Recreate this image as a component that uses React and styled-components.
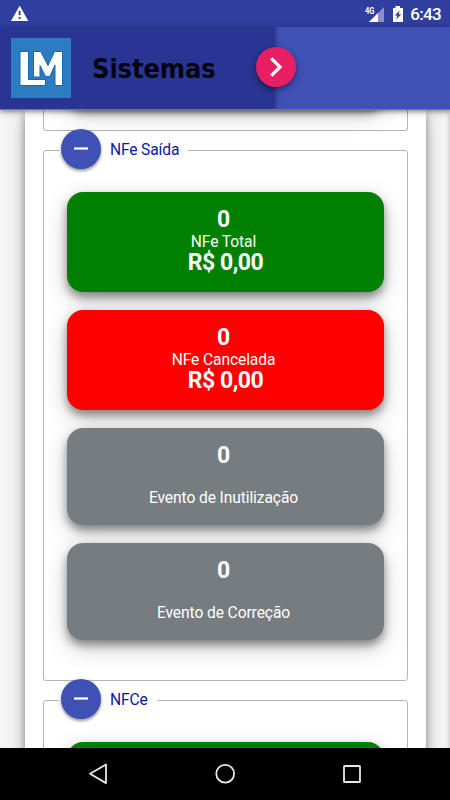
import React from "react";
import styled, { createGlobalStyle } from "styled-components";

const GlobalStyle = createGlobalStyle`
  * { box-sizing: border-box; }
  body { margin: 0; overflow: hidden; font-family: Roboto, "Liberation Sans", sans-serif; }
`;

const Screen = styled.div`
  display: flex;
  flex-direction: column;
  width: 450px;
  height: 800px;
  overflow: hidden;
  background: #f5f5f5;
`;

const StatusBar = styled.div`
  flex: none;
  display: flex;
  align-items: center;
  height: 27px;
  padding: 0 9px 0 11px;
  background: #303f9f;
  color: #fff;
`;

const StatusIcons = styled.div`
  display: flex;
  align-items: center;
  gap: 7px;
  margin-left: auto;
`;

const Clock = styled.span`
  margin-left: -1px;
  font-size: 17px;
  line-height: 20px;
  font-weight: 500;
  letter-spacing: -0.7px;
  padding-top: 1px;
`;

const Header = styled.header`
  flex: none;
  position: relative;
  z-index: 2;
  display: flex;
  height: 83px;
  background: #3f51b5;
  border-bottom: 1px solid #6d77ac;
  box-shadow: 0 2px 4px rgba(0, 0, 0, 0.35), 0 3px 9px rgba(0, 0, 0, 0.12);
`;

const Drawer = styled.div`
  display: flex;
  align-items: center;
  width: 275px;
  padding-left: 11px;
  background: #283593;
  box-shadow: 1px 0 5px rgba(0, 0, 0, 0.3);
  clip-path: inset(0 -10px 0 0);
`;

const Brand = styled.span`
  margin: 2px 0 0 21px;
  color: #050511;
  font: bold 27px/32px "DejaVu Sans Condensed", "Noto Sans", sans-serif;
  font-stretch: condensed;
  letter-spacing: -0.1px;
`;

const DrawerToggle = styled.button`
  position: absolute;
  left: 256px;
  top: 20px;
  display: flex;
  padding: 0;
  border: 0;
  border-radius: 50%;
  background: #e91e63;
  box-shadow: 0 2px 4px rgba(0, 0, 0, 0.35), 0 3px 9px rgba(0, 0, 0, 0.2);
`;

const Content = styled.main`
  flex: 1;
  min-height: 0;
  overflow: hidden;
  padding: 0 24px 0 25px;
  box-shadow: inset -4px 0 4px -3px rgba(0, 0, 0, 0.2);
`;

const Panel = styled.div`
  display: flex;
  flex-direction: column;
  height: 680px;
  padding: 0 18px;
  background: #fff;
  box-shadow: 0 4px 8px rgba(0, 0, 0, 0.38), 0 6px 20px rgba(0, 0, 0, 0.2);
`;

const PreviousGroup = styled.div`
  flex: none;
  height: 21px;
  padding: 0 23px;
  border: 1px solid #b5b5b5;
  border-top: 0;
  border-radius: 0 0 3px 3px;
`;

const tileShadow = "0 5px 8px rgba(0, 0, 0, 0.4), 0 8px 24px rgba(0, 0, 0, 0.2)";

const PreviousTile = styled.div`
  height: 40px;
  margin-top: -43px;
  border-radius: 16px;
  box-shadow: ${tileShadow};
`;

const Group = styled.fieldset`
  flex: none;
  min-width: 0;
  height: ${(p) => p.$height}px;
  margin: -2px 0 0;
  padding: 21px 23px 0;
  border: 1px solid #b5b5b5;
  border-radius: 3px;
`;

const Legend = styled.legend`
  display: flex;
  align-items: center;
  height: 42px;
  margin-left: -8px;
  padding: 0 9px 2px 2px;
  color: #0d16ac;
  font-size: 15.6px;
  letter-spacing: -0.15px;
`;

const LegendText = styled.span`
  padding-top: 1px;
`;

const CollapseButton = styled.button`
  display: flex;
  align-items: center;
  justify-content: center;
  width: 40px;
  height: 40px;
  margin-right: 9px;
  padding: 0;
  border: 0;
  border-radius: 50%;
  background: #3f51b5;
  box-shadow: 0 2px 3px rgba(0, 0, 0, 0.35), 0 1px 5px rgba(0, 0, 0, 0.12);
`;

const TileList = styled.div`
  display: flex;
  flex-direction: column;
  gap: 18px;
`;

const Tile = styled.div`
  display: flex;
  flex-direction: column;
  align-items: center;
  height: ${(p) => (p.$amount ? 100 : 97)}px;
  padding: 16px 0 0;
  border-radius: 16px;
  background: ${(p) => p.$color};
  color: #fff;
  box-shadow: ${tileShadow};
`;

const Count = styled.strong`
  margin-right: 4px;
  font-size: 23px;
  line-height: 24px;
  font-weight: 700;
`;

const TileLabel = styled.span`
  margin: ${(p) => (p.$spaced ? 20 : 0)}px 4px 0 0;
  font-size: 15.6px;
  line-height: 20px;
  letter-spacing: -0.1px;
`;

const Amount = styled.strong`
  font-size: 23px;
  line-height: 22px;
  font-weight: 700;
  letter-spacing: -0.5px;
`;

const NavBar = styled.nav`
  flex: none;
  position: relative;
  z-index: 2;
  display: grid;
  grid-template-columns: repeat(3, 127px);
  justify-content: center;
  align-items: center;
  justify-items: center;
  height: 52px;
  background: #000;
`;

const WarningIcon = () => (
  <svg width="18" height="17" viewBox="0 0 18 17">
    <path d="M8.7 0.8 17.3 16H0Z" fill="#fff" />
    <path d="M8.6 5.8v4.5M8.6 12v2" stroke="#303f9f" strokeWidth="1.9" />
  </svg>
);

const SignalIcon = () => (
  <svg width="20" height="18" viewBox="0 0 20 18">
    <text x="0" y="8.5" fill="#fff" fontSize="9" fontWeight="700" fontFamily="Roboto" textLength="9.5" lengthAdjust="spacingAndGlyphs">4G</text>
    <path d="M19 2v15H4Z" fill="#8790c8" />
    <path d="M13 8v9H4Z" fill="#fff" />
  </svg>
);

const BatteryIcon = () => (
  <svg width="12" height="18" viewBox="0 0 12 18">
    <path d="M3.5 1h4.5v2h3v14H1V3h2.5Z" fill="#fff" />
    <path d="m7.7 5.4-5 5h2.5l-1 4.2 5.1-5.4H6.7Z" fill="#303f9f" />
  </svg>
);

const Logo = () => (
  <svg width="60" height="60" viewBox="0 0 60 60">
    <rect width="60" height="60" fill="#2d7bc0" />
    <g stroke="#1368b3" strokeWidth="1" strokeLinejoin="round">
      <path d="M9 13.5h8.5v28H34.5v6H9Z" fill="#fff" />
      <path d="M22.5 39V13.5h7.2L37 27.5l6.6-14h7.9v34H44V27l-5.2 11.5h-4.2L29 27.5V39Z" fill="#fff" />
    </g>
  </svg>
);

const ChevronIcon = () => (
  <svg width="40" height="40" viewBox="0 0 40 40">
    <path d="m15.3 11.3 8.8 8.7-8.8 8.7" fill="none" stroke="#fff" strokeWidth="3.2" />
  </svg>
);

const MinusIcon = () => (
  <svg width="14" height="4" viewBox="0 0 14 4">
    <path d="M0 1.5h14" stroke="#fff" strokeWidth="2.2" />
  </svg>
);

const BackIcon = () => (
  <svg width="22" height="24" viewBox="0 0 22 24">
    <path d="M19 2.5v18.6L3 11.8Z" fill="none" stroke="#e8e8e8" strokeWidth="1.8" strokeLinejoin="round" />
  </svg>
);

const HomeIcon = () => (
  <svg width="22" height="22" viewBox="0 0 22 22">
    <circle cx="11.2" cy="10.7" r="8.9" fill="none" stroke="#e8e8e8" strokeWidth="1.8" />
  </svg>
);

const RecentsIcon = () => (
  <svg width="20" height="20" viewBox="0 0 20 20">
    <rect x="2" y="2" width="16" height="16" rx="0.6" fill="none" stroke="#e8e8e8" strokeWidth="1.8" />
  </svg>
);

const tiles = [
  { label: "NFe Total", amount: "R$ 0,00", color: "#008000" },
  { label: "NFe Cancelada", amount: "R$ 0,00", color: "#ff0000" },
  { label: "Evento de Inutilização", color: "#777c80" },
  { label: "Evento de Correção", color: "#777c80" },
];

const GroupLegend = ({ children }) => (
  <Legend>
    <CollapseButton aria-label="Recolher"><MinusIcon /></CollapseButton>
    <LegendText>{children}</LegendText>
  </Legend>
);

export default function App() {
  return (
    <Screen>
      <GlobalStyle />
      <StatusBar>
        <WarningIcon />
        <StatusIcons>
          <SignalIcon />
          <BatteryIcon />
          <Clock>6:43</Clock>
        </StatusIcons>
      </StatusBar>
      <Header>
        <Drawer>
          <Logo />
          <Brand>Sistemas</Brand>
        </Drawer>
        <DrawerToggle aria-label="Abrir menu"><ChevronIcon /></DrawerToggle>
      </Header>
      <Content>
        <Panel>
          <PreviousGroup><PreviousTile /></PreviousGroup>
          <Group $height={552}>
            <GroupLegend>NFe Saída</GroupLegend>
            <TileList>
              {tiles.map((t) => (
                <Tile key={t.label} $color={t.color} $amount={!!t.amount}>
                  <Count>0</Count>
                  <TileLabel $spaced={!t.amount}>{t.label}</TileLabel>
                  {t.amount && <Amount>{t.amount}</Amount>}
                </Tile>
              ))}
            </TileList>
          </Group>
          <Group $height={200}>
            <GroupLegend>NFCe</GroupLegend>
            <Tile $color="#008000" $amount />
          </Group>
        </Panel>
      </Content>
      <NavBar>
        <BackIcon />
        <HomeIcon />
        <RecentsIcon />
      </NavBar>
    </Screen>
  );
}
